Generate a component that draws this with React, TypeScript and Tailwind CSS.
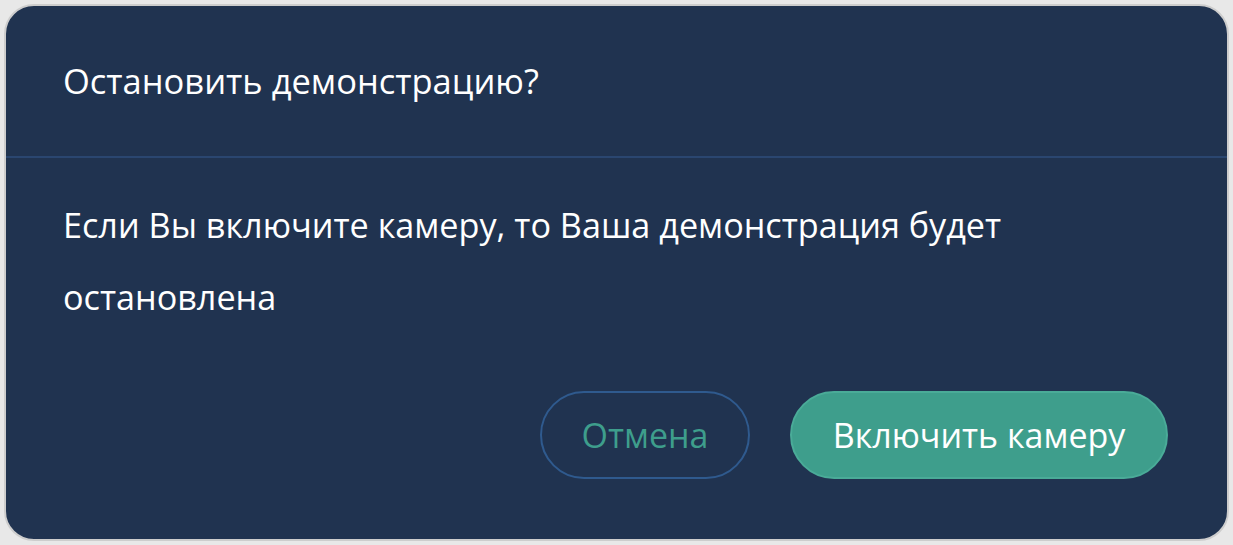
export default function App() {
  return (
    <div
      className="h-[545px] w-[1233px] bg-[#e8e8e8] p-[4px]"
      style={{ fontFamily: '"Open Sans", "Noto Sans", sans-serif' }}
    >
      <div className="flex h-full flex-col overflow-hidden rounded-[30px] border-2 border-[#cdcdcd] bg-[#203350]">
        <div className="flex h-[150px] shrink-0 items-center px-[57px]">
          <h1 className="text-[34.5px] font-normal text-white">Остановить демонстрацию?</h1>
        </div>
        <div className="h-[2px] w-full bg-[#2a4670]" />
        <div className="px-[57px] pt-[31px]">
          <p className="text-[34.2px] leading-[72px] text-white">
            Если Вы включите камеру, то Ваша демонстрация будет
            <br />
            остановлена
          </p>
        </div>
        <div className="mt-auto flex justify-end gap-[40px] pb-[60px] pr-[59px]">
          <button className="flex h-[88px] w-[210px] items-center justify-center rounded-full border-2 border-[#2f5a8e] text-[34px] text-[#3e9e8c]">
            Отмена
          </button>
          <button className="flex h-[88px] w-[378px] items-center justify-center rounded-full border-2 border-[#4aab98] bg-[#3e9e8c] text-[34px] text-white">
            Включить камеру
          </button>
        </div>
      </div>
    </div>
  );
}
